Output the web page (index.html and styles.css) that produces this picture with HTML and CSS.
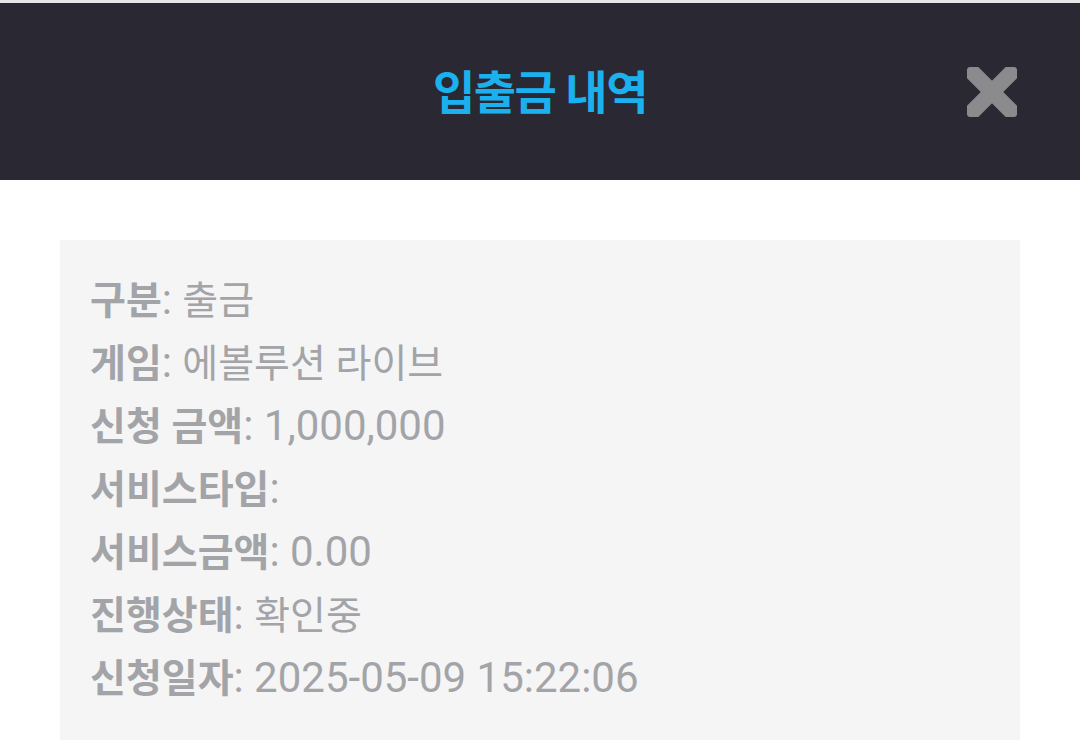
FILE: index.html
```html
<!DOCTYPE html>
<html lang="ko">
<head>
    <meta charset="UTF-8">
    <meta name="viewport" content="width=device-width, initial-scale=1.0">
    <title>입출금 내역</title>
    <link rel="stylesheet" href="styles.css">
</head>
<body>

    <div class="top-strip"></div>

    <header class="modal-header">
        <h1 class="modal-title">입출금 내역</h1>
        <button class="close-btn" type="button" aria-label="닫기">
            <svg width="50" height="50" viewBox="0 0 50 50">
                <rect x="-9" y="17" width="68" height="16" rx="5" transform="rotate(45 25 25)" fill="#8b8b8d"/>
                <rect x="-9" y="17" width="68" height="16" rx="5" transform="rotate(-45 25 25)" fill="#8b8b8d"/>
            </svg>
        </button>
    </header>

    <div class="content">
        <div class="detail-box">
            <p><b class="ko">구분</b>: <span class="ko">출금</span></p>
            <p><b class="ko">게임</b>: <span class="ko">에볼루션 라이브</span></p>
            <p><b class="ko">신청 금액</b>: 1,000,000</p>
            <p><b class="ko">서비스타입</b>:</p>
            <p><b class="ko">서비스금액</b>: 0.00</p>
            <p><b class="ko">진행상태</b>: <span class="ko">확인중</span></p>
            <p><b class="ko">신청일자</b>: 2025-05-09 15:22:06</p>
        </div>
    </div>

</body>
</html>
```

FILE: styles.css
```css
body {
    margin: 0;
    font-family: Roboto, "Noto Sans CJK KR", sans-serif;
    background: #ffffff;
}

.top-strip {
    height: 3px;
    background: #e6e6e9;
}

.modal-header {
    height: 177px;
    background: #2a2933;
    display: flex;
    align-items: center;
    justify-content: center;
    position: relative;
}

.modal-title {
    margin: 0 0 6px;
    color: #1bb1ee;
    font-size: 46px;
    font-weight: 700;
    letter-spacing: -1.5px;
}

.close-btn {
    position: absolute;
    right: 63px;
    top: 64px;
    padding: 0;
    border: none;
    background: none;
    cursor: pointer;
}

.close-btn svg {
    display: block;
}

.content {
    padding: 60px 60px 0;
}

.detail-box {
    background: #f5f5f6;
    padding: 28px 30px 31px;
}

.detail-box p {
    margin: 0;
    height: 63px;
    font-size: 42px;
    line-height: 63px;
    color: #a3a4a8;
}

.detail-box .ko {
    font-size: 39px;
}

.detail-box b {
    font-weight: 700;
}
```
